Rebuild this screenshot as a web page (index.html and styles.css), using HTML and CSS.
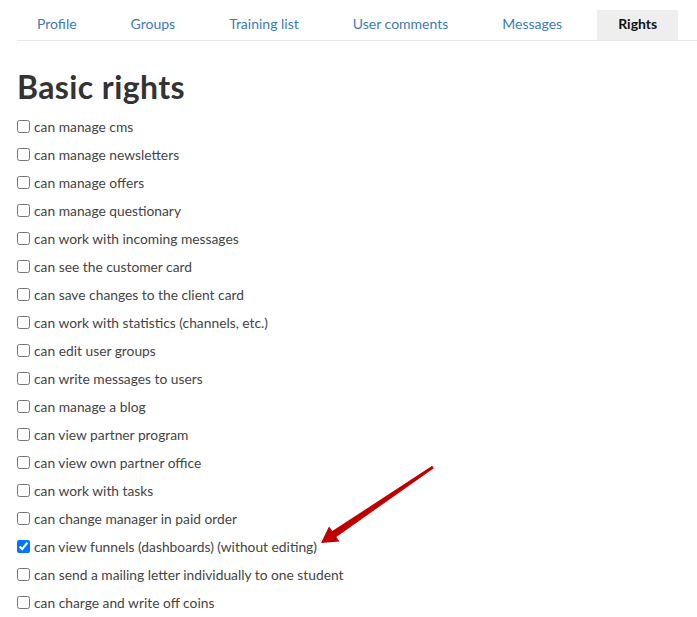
FILE: index.html
```html
<!DOCTYPE html>
<html>
<head>
<meta charset="utf-8">
<link rel="stylesheet" href="styles.css">
</head>
<body>
<div class="page">
  <ul class="tabs">
    <li class="tab"><a>Profile</a></li>
    <li class="tab"><a>Groups</a></li>
    <li class="tab"><a>Training list</a></li>
    <li class="tab"><a>User comments</a></li>
    <li class="tab"><a>Messages</a></li>
    <li class="tab active"><a>Rights</a></li>
  </ul>
  <h1 class="title">Basic rights</h1>
  <div class="rights">
    <label class="row"><input type="checkbox"> can manage cms</label>
    <label class="row"><input type="checkbox"> can manage newsletters</label>
    <label class="row"><input type="checkbox"> can manage offers</label>
    <label class="row"><input type="checkbox"> can manage questionary</label>
    <label class="row"><input type="checkbox"> can work with incoming messages</label>
    <label class="row"><input type="checkbox"> can see the customer card</label>
    <label class="row"><input type="checkbox"> can save changes to the client card</label>
    <label class="row"><input type="checkbox"> can work with statistics (channels, etc.)</label>
    <label class="row"><input type="checkbox"> can edit user groups</label>
    <label class="row"><input type="checkbox"> can write messages to users</label>
    <label class="row"><input type="checkbox"> can manage a blog</label>
    <label class="row"><input type="checkbox"> can view partner program</label>
    <label class="row"><input type="checkbox"> can view own partner office</label>
    <label class="row"><input type="checkbox"> can work with tasks</label>
    <label class="row"><input type="checkbox"> can change manager in paid order</label>
    <label class="row"><input type="checkbox" checked> can view funnels (dashboards) (without editing)</label>
    <label class="row"><input type="checkbox"> can send a mailing letter individually to one student</label>
    <label class="row"><input type="checkbox"> can charge and write off coins</label>
  </div>
  <svg class="arrow" width="697" height="617" viewBox="0 0 697 617">
    <polygon fill="#c00000" points="321,543 329,526.5 332.3,531.1 432.2,465.8 433.8,468.2 336.3,536.9 339.4,541.5"/>
  </svg>
</div>
</body>
</html>
```
FILE: styles.css
```css
html, body {
  margin: 0;
  padding: 0;
  background: #fff;
}
body {
  font-family: Lato, "Liberation Sans", sans-serif;
  color: #333;
}
.page {
  position: relative;
  padding: 10px 0 0 17px;
  height: 607px;
}
.tabs {
  list-style: none;
  margin: 0;
  padding: 0 0 0 1px;
  display: flex;
  gap: 16px;
  border-bottom: 1px solid #e8e8e8;
}
.tab a {
  display: block;
  height: 29px;
  line-height: 28px;
  padding: 0 19px 1px 19px;
  font-size: 14px;
  color: #3d7ab8;
}
.tab.active a {
  background: #eeeeee;
  color: #111;
  font-weight: bold;
  padding: 0 21px 1px 21px;
}
.title {
  margin: 28px 0 7px 0;
  font-size: 32px;
  letter-spacing: 0.4px;
  line-height: 36px;
  font-weight: bold;
  color: #333;
}
.rights {
  display: flex;
  flex-direction: column;
}
.row {
  display: flex;
  align-items: center;
  gap: 4px;
  height: 28px;
  font-size: 13.8px;
  color: #444;
}
.row input {
  margin: 0;
  width: 13px;
  height: 13px;
}
.arrow {
  position: absolute;
  left: 0;
  top: 0;
  pointer-events: none;
}
```
